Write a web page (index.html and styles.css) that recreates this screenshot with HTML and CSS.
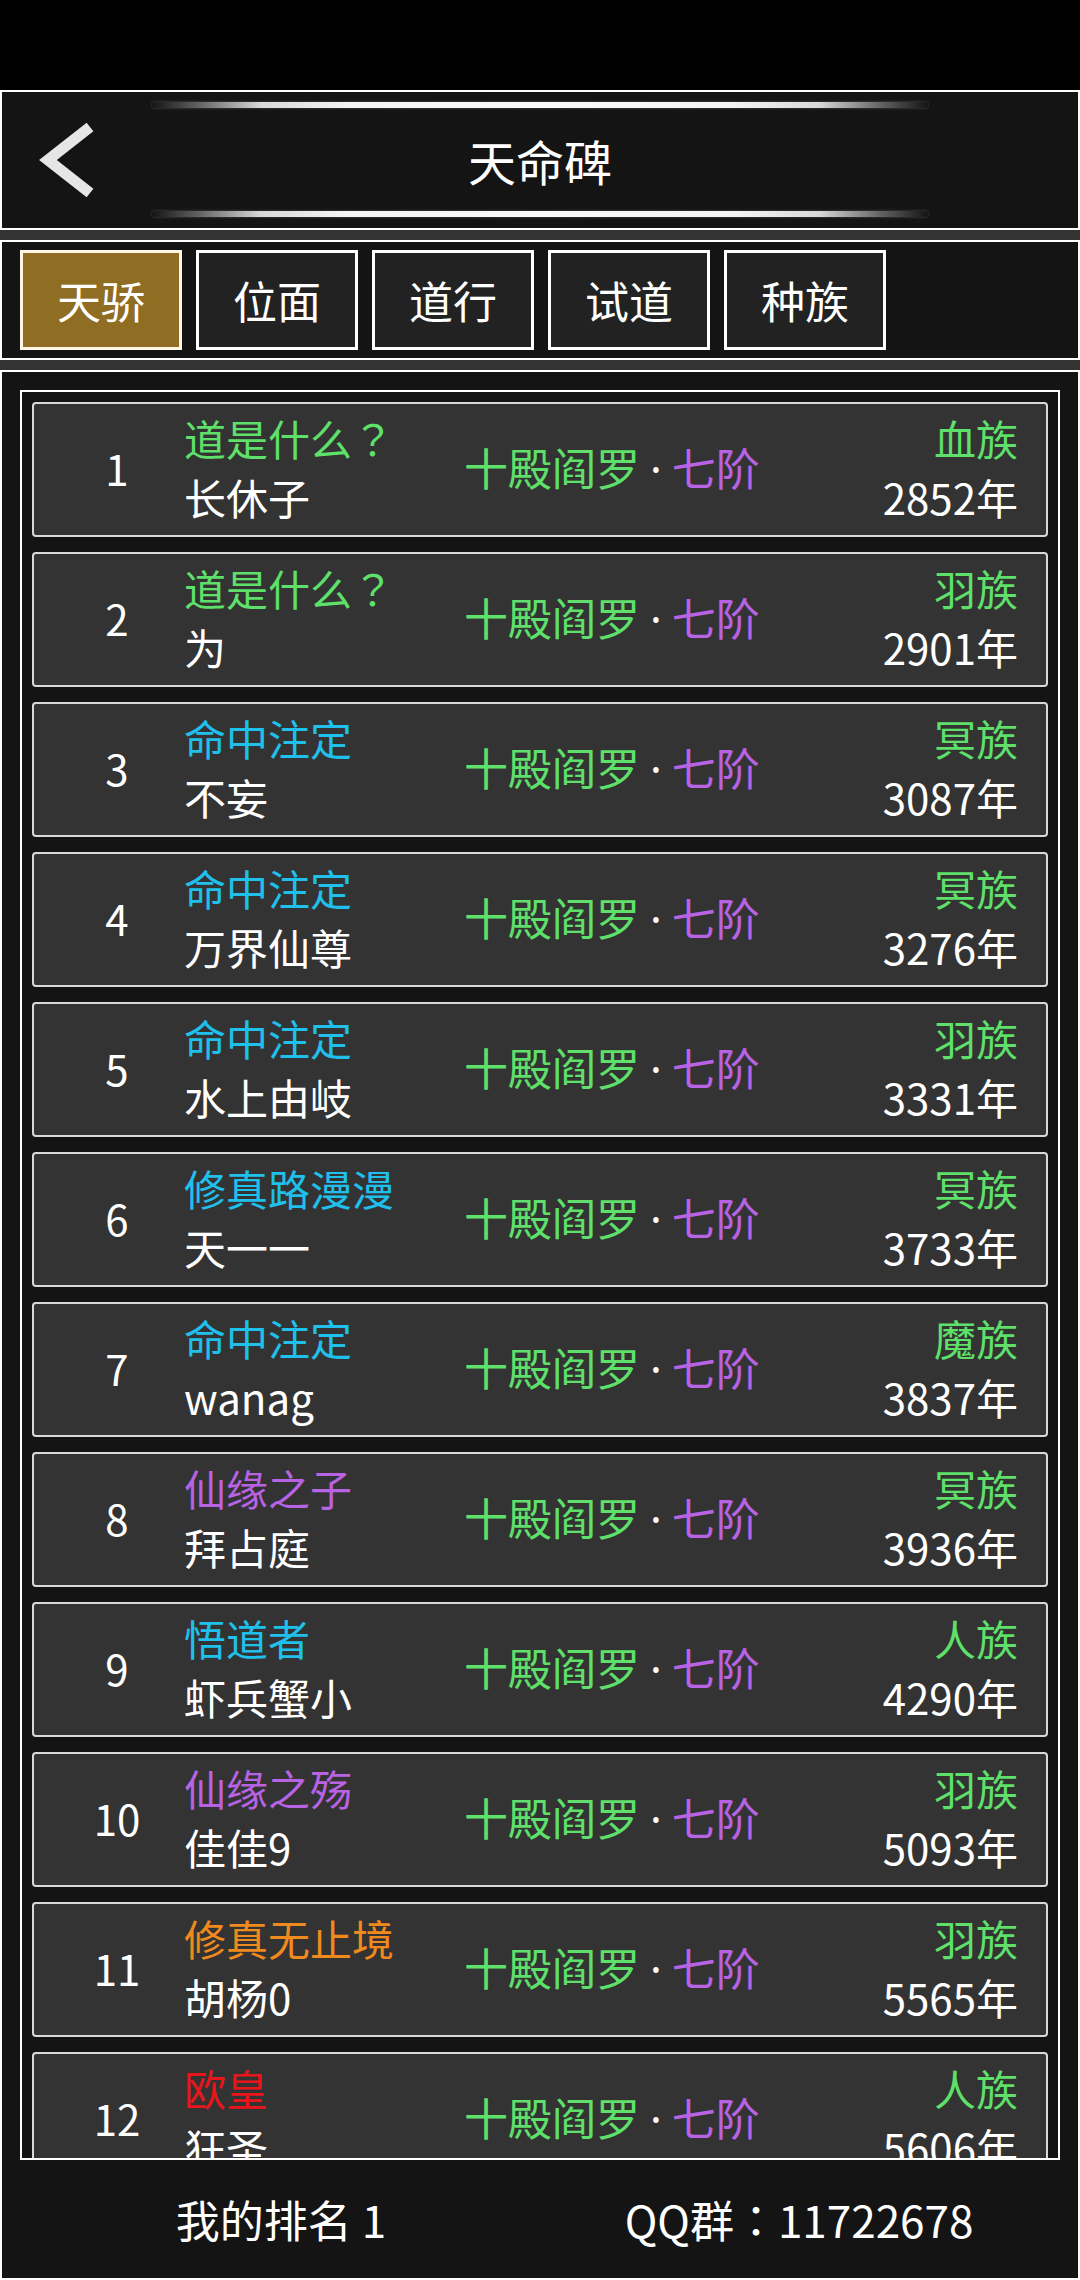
FILE: index.html
```html
<!DOCTYPE html>
<html lang="zh-CN">
<head>
<meta charset="utf-8">
<title>天命碑</title>
<link rel="stylesheet" href="styles.css">
</head>
<body>
<div class="status"></div>
<div class="app">
  <header class="header">
    <div class="back">
      <svg viewBox="0 0 150 136" width="150" height="136">
        <polyline points="88,35 46,68 88,101" fill="none" stroke="#e6e6e6" stroke-width="11" stroke-linejoin="miter"/>
      </svg>
    </div>
    <div class="header-center">
      <div class="glow-line"></div>
      <h1 class="title">天命碑</h1>
      <div class="glow-line"></div>
    </div>
    <div class="header-side"></div>
  </header>

  <nav class="tabs">
    <div class="tab active">天骄</div>
    <div class="tab">位面</div>
    <div class="tab">道行</div>
    <div class="tab">试道</div>
    <div class="tab">种族</div>
  </nav>

  <main class="main">
    <div class="board">
      <div class="row"><div class="rank">1</div><div class="name"><div class="tag green">道是什么<span class="punct" lang="zh-TW">？</span></div><div class="nick">长休子</div></div><div class="realm"><span class="green">十殿阎罗</span><span class="dot">·</span><span class="purple">七阶</span></div><div class="info"><div class="green">血族</div><div>2852年</div></div></div>
      <div class="row"><div class="rank">2</div><div class="name"><div class="tag green">道是什么<span class="punct" lang="zh-TW">？</span></div><div class="nick">为</div></div><div class="realm"><span class="green">十殿阎罗</span><span class="dot">·</span><span class="purple">七阶</span></div><div class="info"><div class="green">羽族</div><div>2901年</div></div></div>
      <div class="row"><div class="rank">3</div><div class="name"><div class="tag cyan">命中注定</div><div class="nick">不妄</div></div><div class="realm"><span class="green">十殿阎罗</span><span class="dot">·</span><span class="purple">七阶</span></div><div class="info"><div class="green">冥族</div><div>3087年</div></div></div>
      <div class="row"><div class="rank">4</div><div class="name"><div class="tag cyan">命中注定</div><div class="nick">万界仙尊</div></div><div class="realm"><span class="green">十殿阎罗</span><span class="dot">·</span><span class="purple">七阶</span></div><div class="info"><div class="green">冥族</div><div>3276年</div></div></div>
      <div class="row"><div class="rank">5</div><div class="name"><div class="tag cyan">命中注定</div><div class="nick">水上由岐</div></div><div class="realm"><span class="green">十殿阎罗</span><span class="dot">·</span><span class="purple">七阶</span></div><div class="info"><div class="green">羽族</div><div>3331年</div></div></div>
      <div class="row"><div class="rank">6</div><div class="name"><div class="tag cyan">修真路漫漫</div><div class="nick">天一一</div></div><div class="realm"><span class="green">十殿阎罗</span><span class="dot">·</span><span class="purple">七阶</span></div><div class="info"><div class="green">冥族</div><div>3733年</div></div></div>
      <div class="row"><div class="rank">7</div><div class="name"><div class="tag cyan">命中注定</div><div class="nick">wanag</div></div><div class="realm"><span class="green">十殿阎罗</span><span class="dot">·</span><span class="purple">七阶</span></div><div class="info"><div class="green">魔族</div><div>3837年</div></div></div>
      <div class="row"><div class="rank">8</div><div class="name"><div class="tag purple">仙缘之子</div><div class="nick">拜占庭</div></div><div class="realm"><span class="green">十殿阎罗</span><span class="dot">·</span><span class="purple">七阶</span></div><div class="info"><div class="green">冥族</div><div>3936年</div></div></div>
      <div class="row"><div class="rank">9</div><div class="name"><div class="tag cyan">悟道者</div><div class="nick">虾兵蟹小</div></div><div class="realm"><span class="green">十殿阎罗</span><span class="dot">·</span><span class="purple">七阶</span></div><div class="info"><div class="green">人族</div><div>4290年</div></div></div>
      <div class="row"><div class="rank">10</div><div class="name"><div class="tag purple">仙缘之殇</div><div class="nick">佳佳9</div></div><div class="realm"><span class="green">十殿阎罗</span><span class="dot">·</span><span class="purple">七阶</span></div><div class="info"><div class="green">羽族</div><div>5093年</div></div></div>
      <div class="row"><div class="rank">11</div><div class="name"><div class="tag orange">修真无止境</div><div class="nick">胡杨0</div></div><div class="realm"><span class="green">十殿阎罗</span><span class="dot">·</span><span class="purple">七阶</span></div><div class="info"><div class="green">羽族</div><div>5565年</div></div></div>
      <div class="row"><div class="rank">12</div><div class="name"><div class="tag red">欧皇</div><div class="nick">狂圣</div></div><div class="realm"><span class="green">十殿阎罗</span><span class="dot">·</span><span class="purple">七阶</span></div><div class="info"><div class="green">人族</div><div>5606年</div></div></div>
    </div>
    <footer class="footer">
      <div class="foot-item">我的排名 1</div>
      <div class="foot-item">QQ群<span class="punct" lang="zh-TW">：</span>11722678</div>
    </footer>
  </main>
</div>
</body>
</html>
```
FILE: styles.css
```css
* { box-sizing: border-box; }
html, body { margin: 0; padding: 0; }
body {
  width: 1080px;
  height: 2280px;
  overflow: hidden;
  background: #000;
  color: #fff;
  font-family: "Noto Sans CJK SC", "Noto Sans", sans-serif;
}
.status { height: 90px; background: #000; }
.app {
  height: 2190px;
  background: #333;
  display: flex;
  flex-direction: column;
  gap: 10px;
}
.header {
  height: 140px;
  border: 2px solid #fff;
  background: #141414;
  display: grid;
  grid-template-columns: 150px 1fr 150px;
}
.back { display: flex; }
.back svg { display: block; }
.header-center {
  display: flex;
  flex-direction: column;
  padding: 10px 0 11px;
}
.glow-line {
  height: 6px;
  border-radius: 3px;
  background: linear-gradient(to right, rgba(255,255,255,0) 0%, rgba(150,150,150,0.6) 6%, #d8d8d8 14%, #f4f4f4 25%, #fafafa 50%, #f4f4f4 75%, #d8d8d8 86%, rgba(150,150,150,0.6) 94%, rgba(255,255,255,0) 100%);
  box-shadow: 0 0 3px rgba(255,255,255,0.25);
}
.title {
  flex: 1;
  margin: 0;
  display: flex;
  align-items: center;
  justify-content: center;
  font-size: 48px;
  font-weight: 400;
  color: #fff;
}
.tabs {
  height: 120px;
  border: 2px solid #fff;
  background: #141414;
  display: flex;
  gap: 14px;
  padding: 8px 18px;
}
.tab {
  width: 162px;
  height: 100px;
  border: 3px solid #fff;
  background: #222;
  display: flex;
  align-items: center;
  justify-content: center;
  font-size: 44px;
  color: #fff;
}
.tab.active { background: #8f6d22; border-color: #fff6e6; }
.main {
  flex: 1;
  border: 2px solid #fff;
  background: #141414;
  padding: 18px 18px 0;
  display: flex;
  flex-direction: column;
}
.board {
  height: 1770px;
  flex: none;
  border: 2px solid #fff;
  overflow: hidden;
  padding: 10px;
  display: flex;
  flex-direction: column;
  gap: 15px;
}
.row {
  flex: none;
  height: 135px;
  border: 2px solid #d9d9d9;
  border-radius: 4px;
  background: #333;
  display: grid;
  grid-template-columns: 150px 280px auto 1fr;
  align-items: center;
  padding-bottom: 5px;
}
.rank {
  padding-left: 16px;
  text-align: center;
  font-size: 42px;
  color: #fff;
}
.name, .info {
  font-size: 42px;
  line-height: 59px;
  white-space: nowrap;
}
.punct { font-family: "Noto Sans CJK TC", "Noto Sans CJK JP", "Noto Sans CJK SC", sans-serif; }
.info { text-align: right; padding-right: 28px; }
.nick { color: #fff; }
.realm { font-size: 44px; white-space: nowrap; }
.dot {
  color: #fff;
  font-family: "Noto Sans", sans-serif;
  margin: 0 10px;
}
.green { color: #5ee06a; }
.cyan { color: #1fc0ec; }
.purple { color: #b862e4; }
.orange { color: #f0891e; }
.red { color: #e8151b; }
.footer {
  flex: 1;
  display: grid;
  grid-template-columns: 1fr 1fr;
  align-items: center;
  padding: 0 2px 0;
}
.foot-item {
  text-align: center;
  font-size: 44px;
  color: #fff;
}
```
